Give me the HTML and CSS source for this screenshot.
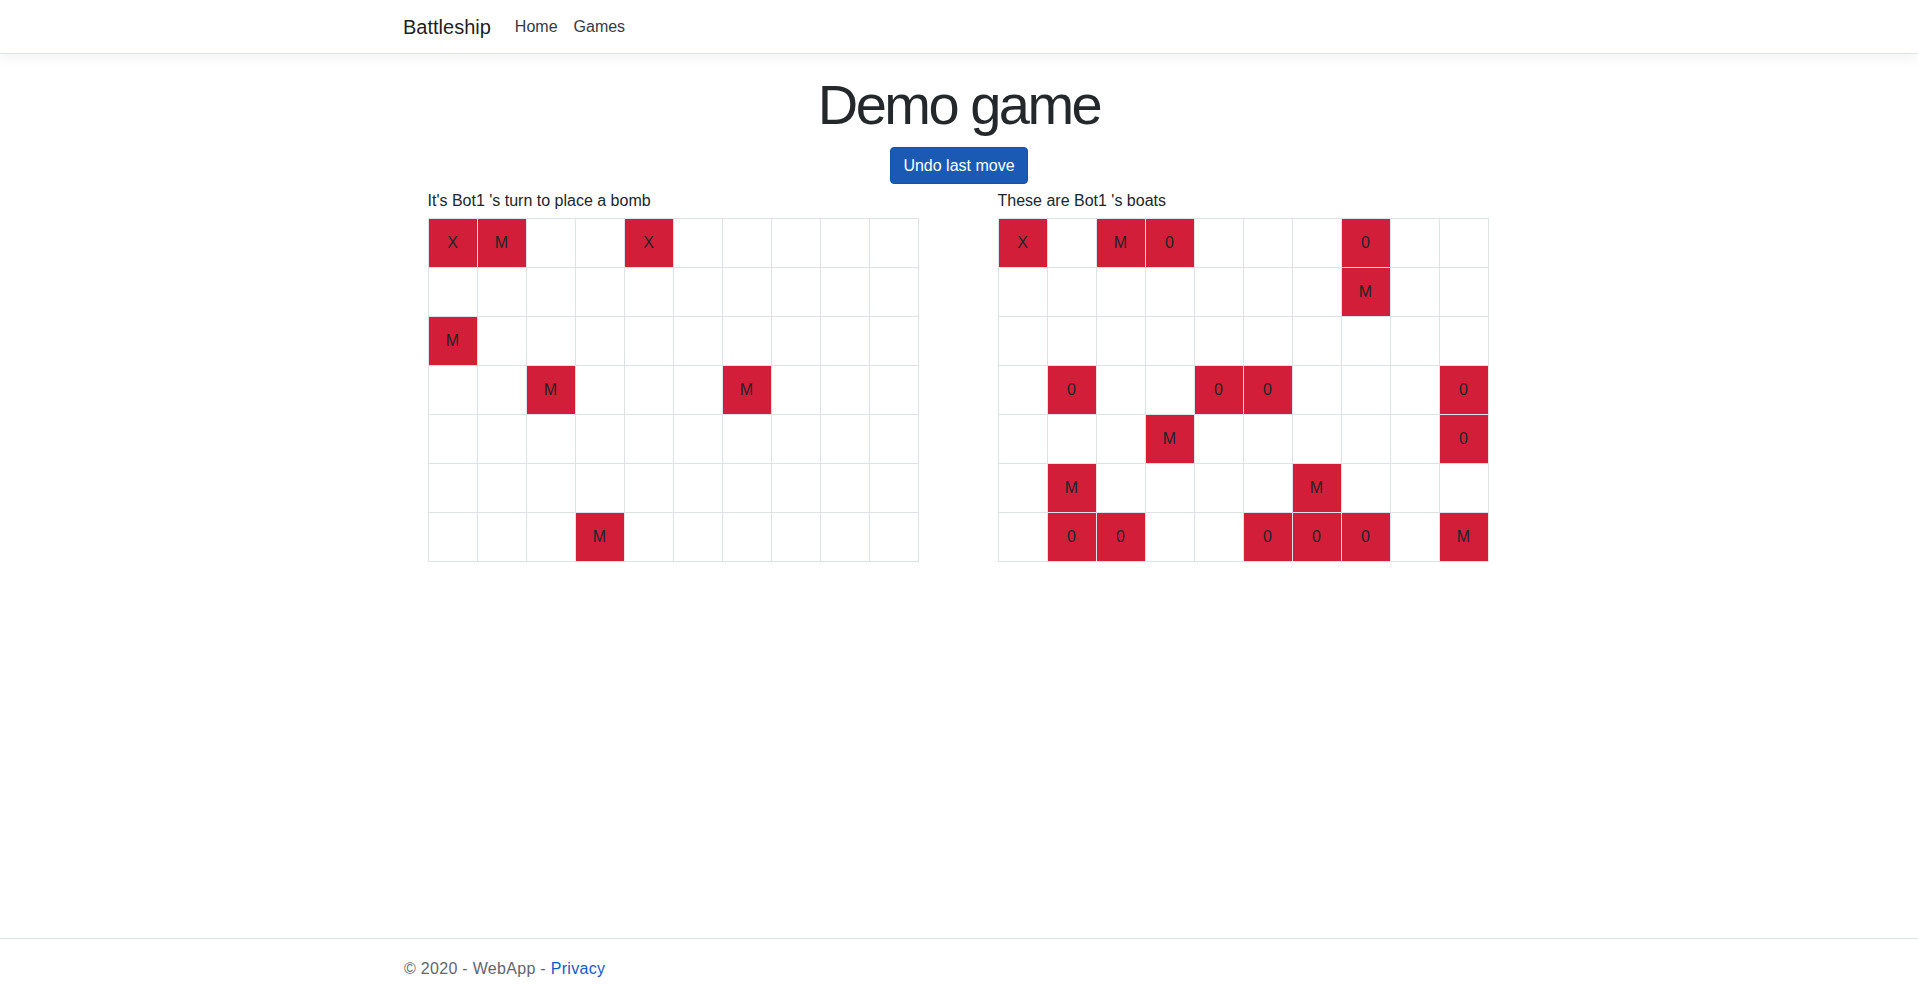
FILE: index.html
```html
<!DOCTYPE html>
<html lang="en">
<head>
<meta charset="utf-8">
<title>Demo game - Battleship</title>
<link rel="stylesheet" href="styles.css">
</head>
<body>
<header class="navbar">
  <div class="container nav-inner">
    <a class="brand" href="#">Battleship</a>
    <ul class="nav">
      <li><a class="nav-link" href="#">Home</a></li>
      <li><a class="nav-link" href="#">Games</a></li>
    </ul>
  </div>
</header>
<main class="container main">
  <h1 class="title">Demo game</h1>
  <div class="actions"><button class="btn">Undo last move</button></div>
  <div class="boards">
    <div class="col">
      <div class="board">
        <p class="label">It's Bot1 's turn to place a bomb</p>
        <table class="grid">
          <tr><td class="hit">X</td><td class="hit">M</td><td></td><td></td><td class="hit">X</td><td></td><td></td><td></td><td></td><td></td></tr>
          <tr><td></td><td></td><td></td><td></td><td></td><td></td><td></td><td></td><td></td><td></td></tr>
          <tr><td class="hit">M</td><td></td><td></td><td></td><td></td><td></td><td></td><td></td><td></td><td></td></tr>
          <tr><td></td><td></td><td class="hit">M</td><td></td><td></td><td></td><td class="hit">M</td><td></td><td></td><td></td></tr>
          <tr><td></td><td></td><td></td><td></td><td></td><td></td><td></td><td></td><td></td><td></td></tr>
          <tr><td></td><td></td><td></td><td></td><td></td><td></td><td></td><td></td><td></td><td></td></tr>
          <tr><td></td><td></td><td></td><td class="hit">M</td><td></td><td></td><td></td><td></td><td></td><td></td></tr>
        </table>
      </div>
    </div>
    <div class="col">
      <div class="board">
        <p class="label">These are Bot1 's boats</p>
        <table class="grid">
          <tr><td class="hit">X</td><td></td><td class="hit">M</td><td class="hit">0</td><td></td><td></td><td></td><td class="hit">0</td><td></td><td></td></tr>
          <tr><td></td><td></td><td></td><td></td><td></td><td></td><td></td><td class="hit">M</td><td></td><td></td></tr>
          <tr><td></td><td></td><td></td><td></td><td></td><td></td><td></td><td></td><td></td><td></td></tr>
          <tr><td></td><td class="hit">0</td><td></td><td></td><td class="hit">0</td><td class="hit">0</td><td></td><td></td><td></td><td class="hit">0</td></tr>
          <tr><td></td><td></td><td></td><td class="hit">M</td><td></td><td></td><td></td><td></td><td></td><td class="hit">0</td></tr>
          <tr><td></td><td class="hit">M</td><td></td><td></td><td></td><td></td><td class="hit">M</td><td></td><td></td><td></td></tr>
          <tr><td></td><td class="hit">0</td><td class="hit">0</td><td></td><td></td><td class="hit">0</td><td class="hit">0</td><td class="hit">0</td><td></td><td class="hit">M</td></tr>
        </table>
      </div>
    </div>
  </div>
</main>
<footer class="footer">
  <div class="container">&copy; 2020 - WebApp - <a class="privacy" href="#">Privacy</a></div>
</footer>
</body>
</html>
```
FILE: styles.css
```css
* { box-sizing: border-box; }
html, body { margin: 0; padding: 0; }
body {
  font-family: "Liberation Sans", Arial, sans-serif;
  font-size: 16px;
  line-height: 1.5;
  color: #212529;
  background: #fff;
  min-height: 100vh;
  display: flex;
  flex-direction: column;
}
a { text-decoration: none; }
.container {
  width: 1140px;
  margin: 0 auto;
  padding: 0 15px;
}
.navbar {
  height: 54px;
  border-bottom: 1px solid #dee2e6;
  box-shadow: 0 4px 12px rgba(0,0,0,.05);
  background: #fff;
}
.nav-inner {
  display: flex;
  align-items: center;
  height: 53px;
}
.brand {
  font-size: 20px;
  line-height: 30px;
  color: rgba(0,0,0,.9);
  margin-right: 16px;
  margin-left: -1px;
}
.nav {
  display: flex;
  list-style: none;
  margin: 0;
  padding: 0;
}
.nav-link {
  display: block;
  padding: 8px;
  color: #343a40;
  font-size: 16px;
  line-height: 24px;
}
.main {
  flex: 1;
  padding-top: 17px;
}
.title {
  font-family: "Liberation Sans", Arial, sans-serif;
  font-weight: 300;
  font-size: 56px;
  line-height: 67px;
  letter-spacing: -2.5px;
  text-align: center;
  color: #25282b;
  margin: 0 0 9px;
}
.actions {
  display: flex;
  justify-content: center;
}
.btn {
  font-family: "Liberation Sans", Arial, sans-serif;
  font-size: 16px;
  line-height: 24px;
  padding: 6px 12px;
  height: 37px;
  width: 138px;
  color: #fff;
  background: #1a5ab4;
  border: 1px solid #1652a6;
  border-radius: 4px;
  cursor: pointer;
}
.boards {
  display: flex;
  margin: 5px -15px 0;
}
.col {
  flex: 1;
  padding: 0 16px 0 14px;
  display: flex;
  justify-content: center;
}
.label {
  margin: 0 0 5px;
  line-height: 24px;
}
.grid {
  border-collapse: collapse;
}
.grid td {
  width: 49px;
  height: 49px;
  padding: 0;
  border: 1px solid #dee2e6;
  text-align: center;
  vertical-align: middle;
  font-size: 16px;
  color: #212529;
}
.grid td.hit {
  background: #d21e39;
}
.footer {
  height: 60px;
  border-top: 1px solid #dee2e6;
  line-height: 59px;
  color: #5f666d;
  white-space: nowrap;
  letter-spacing: 0.3px;
}
.privacy { color: #0f5bd0; }
```
